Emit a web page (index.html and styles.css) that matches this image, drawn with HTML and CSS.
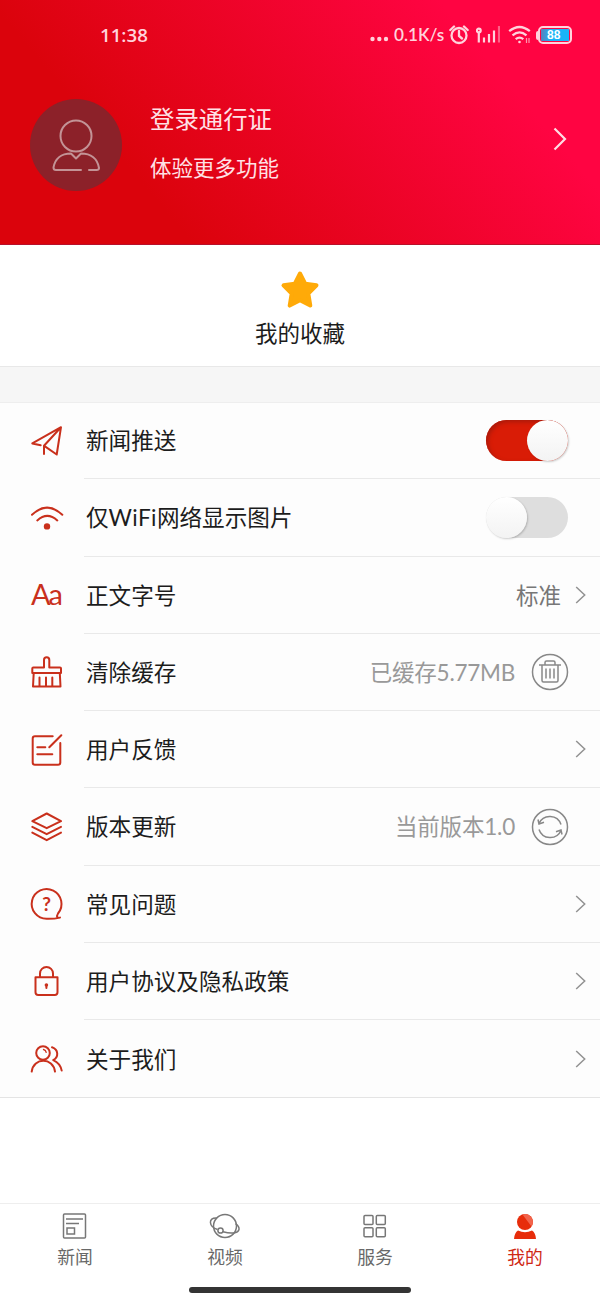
FILE: index.html
```html
<!DOCTYPE html>
<html lang="zh-CN">
<head>
<meta charset="utf-8">
<title>我的</title>
<link rel="stylesheet" href="styles.css">
</head>
<body>
<div class="screen">
  <header class="hero">
    <div class="status">
      <span class="clock">11:38</span>
      <div class="signals">
        <svg class="dots" width="19" height="20" viewBox="0 0 19 20"><g fill="currentColor"><circle cx="2.500" cy="14" r="2.200"/><circle cx="9.300" cy="14" r="2.200"/><circle cx="16" cy="14" r="2.200"/></g></svg>
        <span class="speed">0.1K/s</span>
        <svg class="alarm" width="20" height="20" viewBox="0 0 20 20" fill="none" stroke="currentColor" stroke-width="2.300"><circle cx="10" cy="10.500" r="7.500"/><path d="M10 6v5l3 2.500M1.300 5 5 1.500M18.700 5 15 1.500" stroke-linecap="round"/></svg>
        <svg class="bars" width="24" height="18" viewBox="0 0 24 18" fill="none" stroke="currentColor" stroke-width="2.200"><circle cx="2.800" cy="4.500" r="1.900"/><path d="M2.800 6v10.500M8 11.500v5M13 8v8.500M18 4.500v12"/><path d="M23 0v16.500" opacity=".45"/></svg>
        <svg class="wifi" width="24" height="20" viewBox="0 0 24 20" fill="none" stroke="currentColor" stroke-width="2.300"><path d="M1.200 6.200q10.300-8.500 20.600 0M4.500 10.300q7-5.800 14 0M7.700 14.200q3.800-3.200 7.600 0"/><circle cx="11.500" cy="17" r="1.300" fill="currentColor" stroke="none"/><path d="M18.500 13v5M21 13v5" stroke-width="1.200" opacity=".7"/></svg>
        <span class="nub"></span>
        <div class="battery"><span class="charge">88</span></div>
      </div>
    </div>
    <div class="profile">
      <div class="avatar">
        <svg width="92" height="92" viewBox="0 0 92 92" fill="none" stroke="#c39396" stroke-width="2" stroke-linecap="round" stroke-linejoin="round"><circle cx="46" cy="37" r="15.500"/><path d="M51 71H26q-2.500 0-2.500-2.500C25 60 31 54.500 41 54.500l5 5 5-5C61 54.500 67.500 60 69 69q0 2-2.500 2H59"/></svg>
      </div>
      <div class="who"><div class="login">登录通行证</div><div class="hint">体验更多功能</div></div>
      <svg class="enter" width="14" height="24" viewBox="0 0 14 24" fill="none" stroke="#ffdce3" stroke-width="2.200"><path d="M1.500 1.500 12 12 1.500 22.500"/></svg>
    </div>
  </header>

  <section class="favorites">
    <svg width="40" height="40" viewBox="0 0 40 40" fill="#ffaa08" stroke="#ffaa08" stroke-width="4" stroke-linejoin="round"><path d="m20 3.500 5.200 10.200 11.300 1.600-8.200 8.300 2 12L20 30.200 9.700 35.600l2-12L3.500 15.300l11.300-1.600z"/></svg>
    <span class="favorites-label">我的收藏</span>
  </section>

  <main class="menu">
    <div class="row">
      <svg class="icon" viewBox="0 0 40 40"><path d="M14.700 24.200 6.300 22.400 35 6.200 30.700 33.500 19.300 25.700M18 33v-8.300L34.300 7"/></svg>
      <div class="body"><span class="label">新闻推送</span><span class="switch on"><i class="knob"></i></span></div>
    </div>
    <div class="row">
      <svg class="icon" viewBox="0 0 40 40"><path d="M6 16.800q15-14.400 30.300 0M11.300 22.400q10-9 20 0"/><circle class="solid" cx="21" cy="28.400" r="3.200"/></svg>
      <div class="body"><span class="label">仅<span class="latin">WiFi</span>网络显示图片</span><span class="switch"><i class="knob"></i></span></div>
    </div>
    <div class="row">
      <svg class="icon" viewBox="0 0 40 40"><text class="letters" x="5" y="30" textLength="32">Aa</text></svg>
      <div class="body"><span class="label">正文字号</span><span class="value dark">标准</span><svg class="arrow" viewBox="0 0 10 18"><path d="m.7 1 8.500 8L.7 17"/></svg></div>
    </div>
    <div class="row">
      <svg class="icon" viewBox="0 0 40 40"><path d="M18 15.500V8a2.650 2.650 0 0 1 5.300 0v7.500H34q1 0 1 1v4.600H6.300v-4.600q0-1 1-1zM7.700 21.100 7 34.500h27.500l-.7-13.400M13.500 25.500v9M20 25.500v9M26.300 25.500v9"/></svg>
      <div class="body"><span class="label">清除缓存</span><span class="value cached">已缓存5.77MB</span>
        <svg class="action" viewBox="0 0 38 38"><circle cx="19" cy="19" r="17.500"/><path d="M8 12h22M14 12V9.500q0-1.500 1.500-1.500h7q1.500 0 1.500 1.500V12M11 12v15.500q0 1.500 1.500 1.500h13q1.500 0 1.500-1.500V12M15 15.500v10M19 15.500v10M23 15.500v10"/></svg></div>
    </div>
    <div class="row">
      <svg class="icon" viewBox="0 0 40 40"><path d="M26.700 6.200H9q-2.300 0-2.300 2.300v24q0 2.300 2.300 2.300h23q2.300 0 2.300-2.300V13M35.300 5.200l-12 12M11.300 17.300h8M11.300 24.200h15"/></svg>
      <div class="body"><span class="label">用户反馈</span><svg class="arrow" viewBox="0 0 10 18"><path d="m.7 1 8.500 8L.7 17"/></svg></div>
    </div>
    <div class="row">
      <svg class="icon" viewBox="0 0 40 40"><path d="M20.700 6.500 35 14.200l-14.300 7-14.400-7zM6.300 19.900l14.400 7.300L35 19.900M6.300 25.600l14.400 7.600L35 25.600"/></svg>
      <div class="body"><span class="label">版本更新</span><span class="value version">当前版本1.0</span>
        <svg class="action" viewBox="0 0 38 38"><circle cx="19" cy="19" r="17.500"/><path d="M8 15.500a11.800 11.800 0 0 1 22 1M7 11.500l1 4.500 5-1.800M30 22.500a11.800 11.800 0 0 1-22-1M31 26.500l-1-4.500-5 1.800"/></svg></div>
    </div>
    <div class="row">
      <svg class="icon" viewBox="0 0 40 40"><path d="M34 33.600Q28 35 20.700 34.800A14.900 14.900 0 1 1 32 29.500Q30.500 31.500 31.500 33.800"/><text class="mark" x="20.600" y="26.500">?</text></svg>
      <div class="body"><span class="label">常见问题</span><svg class="arrow" viewBox="0 0 10 18"><path d="m.7 1 8.500 8L.7 17"/></svg></div>
    </div>
    <div class="row">
      <svg class="icon" viewBox="0 0 40 40"><path d="M9.500 16.300h22v15q0 2.700-2.700 2.700H12.200q-2.700 0-2.700-2.700zM14 16V12.500a6.500 6.500 0 0 1 13 0V16M20.400 24v3"/><circle class="solid" cx="20.400" cy="24" r="1.800"/></svg>
      <div class="body"><span class="label">用户协议及隐私政策</span><svg class="arrow" viewBox="0 0 10 18"><path d="m.7 1 8.500 8L.7 17"/></svg></div>
    </div>
    <div class="row">
      <svg class="icon" viewBox="0 0 40 40"><circle cx="17" cy="14" r="6.800"/><path d="M5.700 32.600C7.500 18 27.200 18 29 32.600M26 8.300c6.500 2.200 7 9.700 1.200 12.800 5 2.200 7.500 5.200 8.500 10.500"/><path d="M17.500 10.500q2.300.5 2.700 2.800" stroke-width="1.300"/></svg>
      <div class="body"><span class="label">关于我们</span><svg class="arrow" viewBox="0 0 10 18"><path d="m.7 1 8.500 8L.7 17"/></svg></div>
    </div>
  </main>

  <nav class="tabs">
    <div class="tab"><svg viewBox="0 0 32 28"><rect x="4.500" y="2" width="22" height="24" rx="1"/><path d="M7 7h17M7 11.500h13"/><rect x="8" y="16" width="7.500" height="6"/></svg><span>新闻</span></div>
    <div class="tab"><svg viewBox="0 0 32 28"><circle cx="16" cy="14" r="11.500"/><path d="M7.500 6C-1 5.500-.5 14.500 8.500 17.500M14 19.800C22 22 29 21.500 30 17.500q.5-3-3.500-5.800"/><circle cx="11.500" cy="18.500" r="2.600" fill="#fff"/></svg><span>视频</span></div>
    <div class="tab"><svg viewBox="0 0 32 28"><rect x="5" y="3.500" width="9" height="9" rx="1"/><rect x="17.300" y="3.500" width="9" height="9" rx="1"/><rect x="5" y="15.800" width="9" height="9" rx="1"/><rect x="17.300" y="15.800" width="9" height="9" rx="1"/></svg><span>服务</span></div>
    <div class="tab active"><svg viewBox="0 0 32 28"><circle class="me" cx="16" cy="10" r="8"/><path class="shine" d="M13.500 2.500A8 8 0 0 1 22.500 14.500z"/><path class="me" d="M9 18.500q7 3.500 14 0 3.500 2 4 8.500H5q.5-6.500 4-8.500z"/></svg><span>我的</span></div>
  </nav>
  <div class="home"></div>
</div>
</body>
</html>
```
FILE: styles.css
```css
* { box-sizing: border-box; }
body { margin: 0; background: #fff; font-family: Lato, "Noto Sans CJK SC", sans-serif; color: #1c1c1c; }
svg { display: block; flex: none; }
.screen { width: 600px; height: 1301px; display: flex; flex-direction: column; overflow: hidden; }

.hero { height: 245px; flex: none; background: linear-gradient(50deg, #db030c 24%, #ff0442 80%); border-bottom: 1px solid #b8102a; color: #ffe1e6; }
.status { height: 70px; padding: 0 28px 0 100px; display: flex; align-items: center; justify-content: space-between; color: #ffd3dc; }
.clock { font: 600 18.700px/24px "Open Sans", sans-serif; }
.signals { display: flex; align-items: center; }
.dots { margin-right: 5px; }
.speed { font: 600 17.200px/24px Lato, sans-serif; width: 50px; white-space: nowrap; margin-right: 5px; }
.alarm { margin-right: 7px; }
.bars { margin-right: 8px; }
.wifi { margin-right: 4px; }
.nub { width: 2px; height: 9px; border-radius: 2px 0 0 2px; background: currentColor; }
.battery { width: 34px; height: 18px; border: 2px solid currentColor; border-radius: 5px; padding: 1px; }
.charge { display: block; height: 12px; background: linear-gradient(90deg, #5b7fbb, #19b4f7 35%); font: bold 12px/12px "Liberation Sans", sans-serif; color: #fff; padding-left: 6px; }
.profile { display: flex; height: 150px; align-items: center; padding: 0 32px 0 30px; }
.avatar { width: 92px; height: 92px; border-radius: 50%; background: #8c2129; }
.who { flex: 1; margin: -6px 0 0 28px; display: flex; flex-direction: column; gap: 17px; }
.login { font-size: 24.400px; line-height: 34px; }
.hint { font-size: 21.500px; line-height: 30px; }
.enter { margin: -12px 1px 0 0; }

.favorites { height: 122px; flex: none; display: flex; flex-direction: column; align-items: center; padding-top: 25px; gap: 8px; border-bottom: 1px solid #e8e8e8; }
.favorites-label { font-size: 22.500px; line-height: 32px; }
.menu { flex: none; margin: 0; border-top: 35px solid #f6f6f6; border-bottom: 1px solid #e4e4e4; background: #fdfdfd; box-shadow: inset 0 1px #eee; }
.row { height: 77.250px; padding-left: 26px; display: flex; align-items: center; }
.icon { width: 40px; height: 40px; fill: none; stroke: #c9301c; stroke-width: 2; stroke-linejoin: round; stroke-linecap: round; }
.icon .solid { fill: #c9301c; stroke: none; }
.letters { font: 29px Lato, sans-serif; fill: #c9301c; stroke: none; }
.mark { font: 700 19px Lato, sans-serif; text-anchor: middle; fill: #c9301c; stroke: none; }
.body { flex: 1; height: 100%; margin-left: 18px; padding: 0 32px 0 2px; display: flex; align-items: center; border-bottom: 1px solid #e9e9e9; }
.row:last-child .body { border-bottom: 0; }
.label { flex: 1; font-size: 22.600px; line-height: 32px; padding-top: 2px; }
.latin { letter-spacing: .4px; }
.value { font-size: 22.500px; line-height: 32px; padding-top: 2px; color: #999; margin-right: 16px; white-space: nowrap; }
.cached { letter-spacing: -.25px; }
.version { letter-spacing: -.2px; }
.value.dark { color: #777; margin-right: 14px; }
.arrow { width: 11px; height: 18px; margin-right: -18px; fill: none; stroke: #929292; stroke-width: 1.500; }
.action { width: 38px; height: 38px; margin: 1px -1px 0 0; fill: none; stroke: #888; stroke-width: 1.500; }
.switch { width: 82px; height: 41px; border-radius: 21px; background: #dedede; display: flex; align-items: center; }
.switch.on { background: #d91c06; justify-content: flex-end; box-shadow: inset 2px 2px 4px #a91a0b; }
.knob { width: 41px; height: 41px; border-radius: 50%; background: linear-gradient(#fff, #f3f3f3); box-shadow: 1px 1px 2px #0003; }

.tabs { margin-top: auto; height: 76px; flex: none; border-top: 1px solid #eee; display: grid; grid-template-columns: repeat(4, 1fr); padding-top: 8px; }
.tab { display: flex; flex-direction: column; align-items: center; gap: 4px; font-size: 17.800px; line-height: 26px; color: #686868; }
.tab svg { width: 32px; height: 28px; fill: none; stroke: #777; stroke-width: 1.500; }
.tab.active { color: #cf2814; }
.tab .me { fill: #e72d0b; stroke: none; }
.tab .shine { fill: #f2644c; stroke: none; }
.home { width: 222px; height: 6px; border-radius: 3px; background: #343434; margin: 8px auto 8px; flex: none; }
```
